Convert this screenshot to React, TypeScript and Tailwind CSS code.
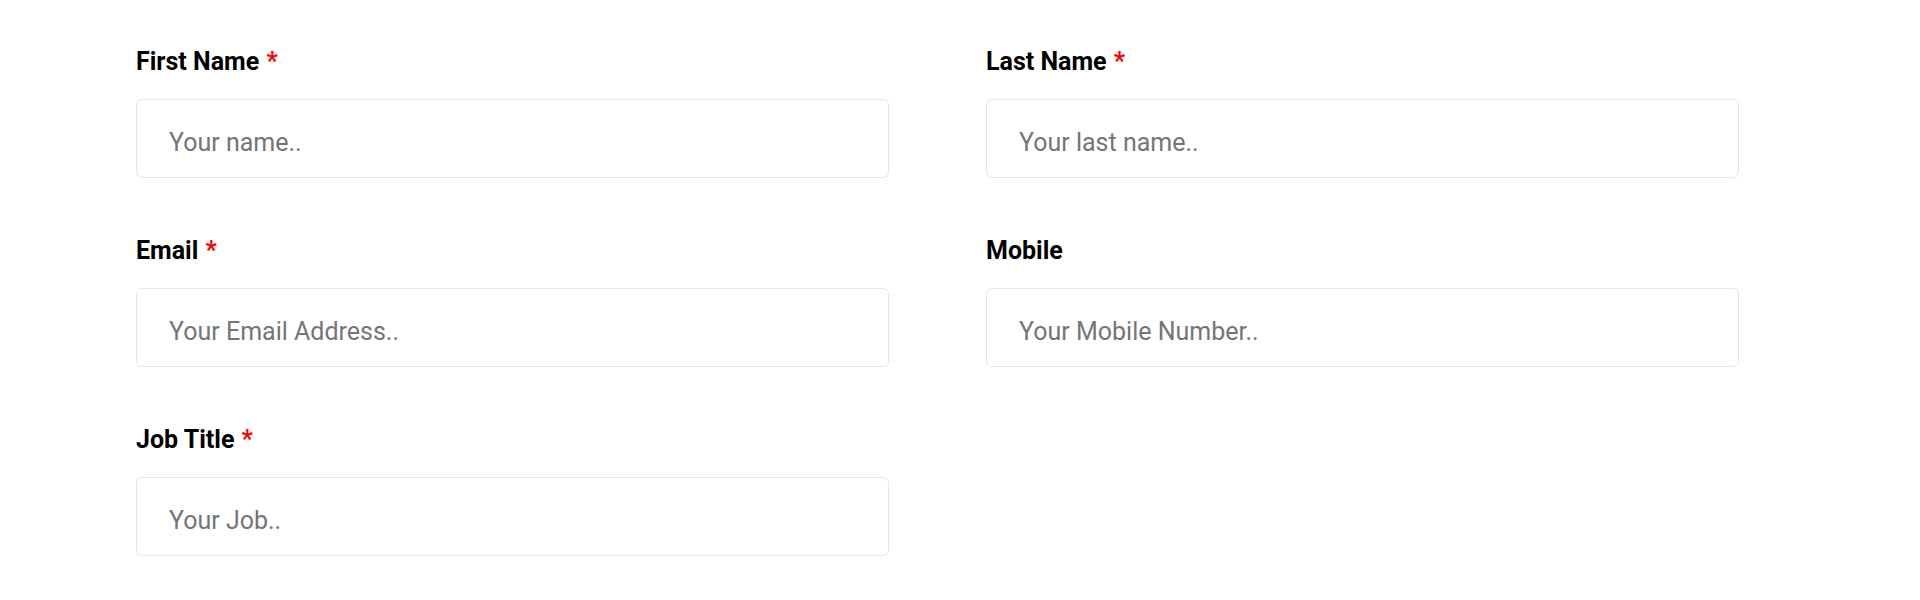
import React from "react";

type Field = { label: string; placeholder: string; required: boolean };

const fields: Field[] = [
  { label: "First Name", placeholder: "Your name..", required: true },
  { label: "Last Name", placeholder: "Your last name..", required: true },
  { label: "Email", placeholder: "Your Email Address..", required: true },
  { label: "Mobile", placeholder: "Your Mobile Number..", required: false },
  { label: "Job Title", placeholder: "Your Job..", required: true },
];

export default function App() {
  return (
    <div className="w-[1920px] h-[600px] bg-white overflow-hidden" style={{ fontFamily: "Roboto, 'Noto Sans', sans-serif" }}>
      <div className="pl-[136px] pt-[47px] grid grid-cols-[753px_753px] gap-x-[97px] gap-y-[58px]">
        {fields.map((f) => (
          <div key={f.label} className="flex flex-col">
            <label className="text-[25px] leading-[30px] font-bold text-[#000] mb-[22px] whitespace-pre">
              {f.label}
              {f.required && <span className="text-[#ff0000] ml-[1px]">{" *"}</span>}
            </label>
            <input
              type="text"
              placeholder={f.placeholder}
              className="h-[79px] w-full rounded-[6px] border border-[#e6e6e6] bg-white px-[32px] pt-[7px] text-[25px] text-[#333] placeholder:text-[#757575] outline-none"
            />
          </div>
        ))}
      </div>
    </div>
  );
}
